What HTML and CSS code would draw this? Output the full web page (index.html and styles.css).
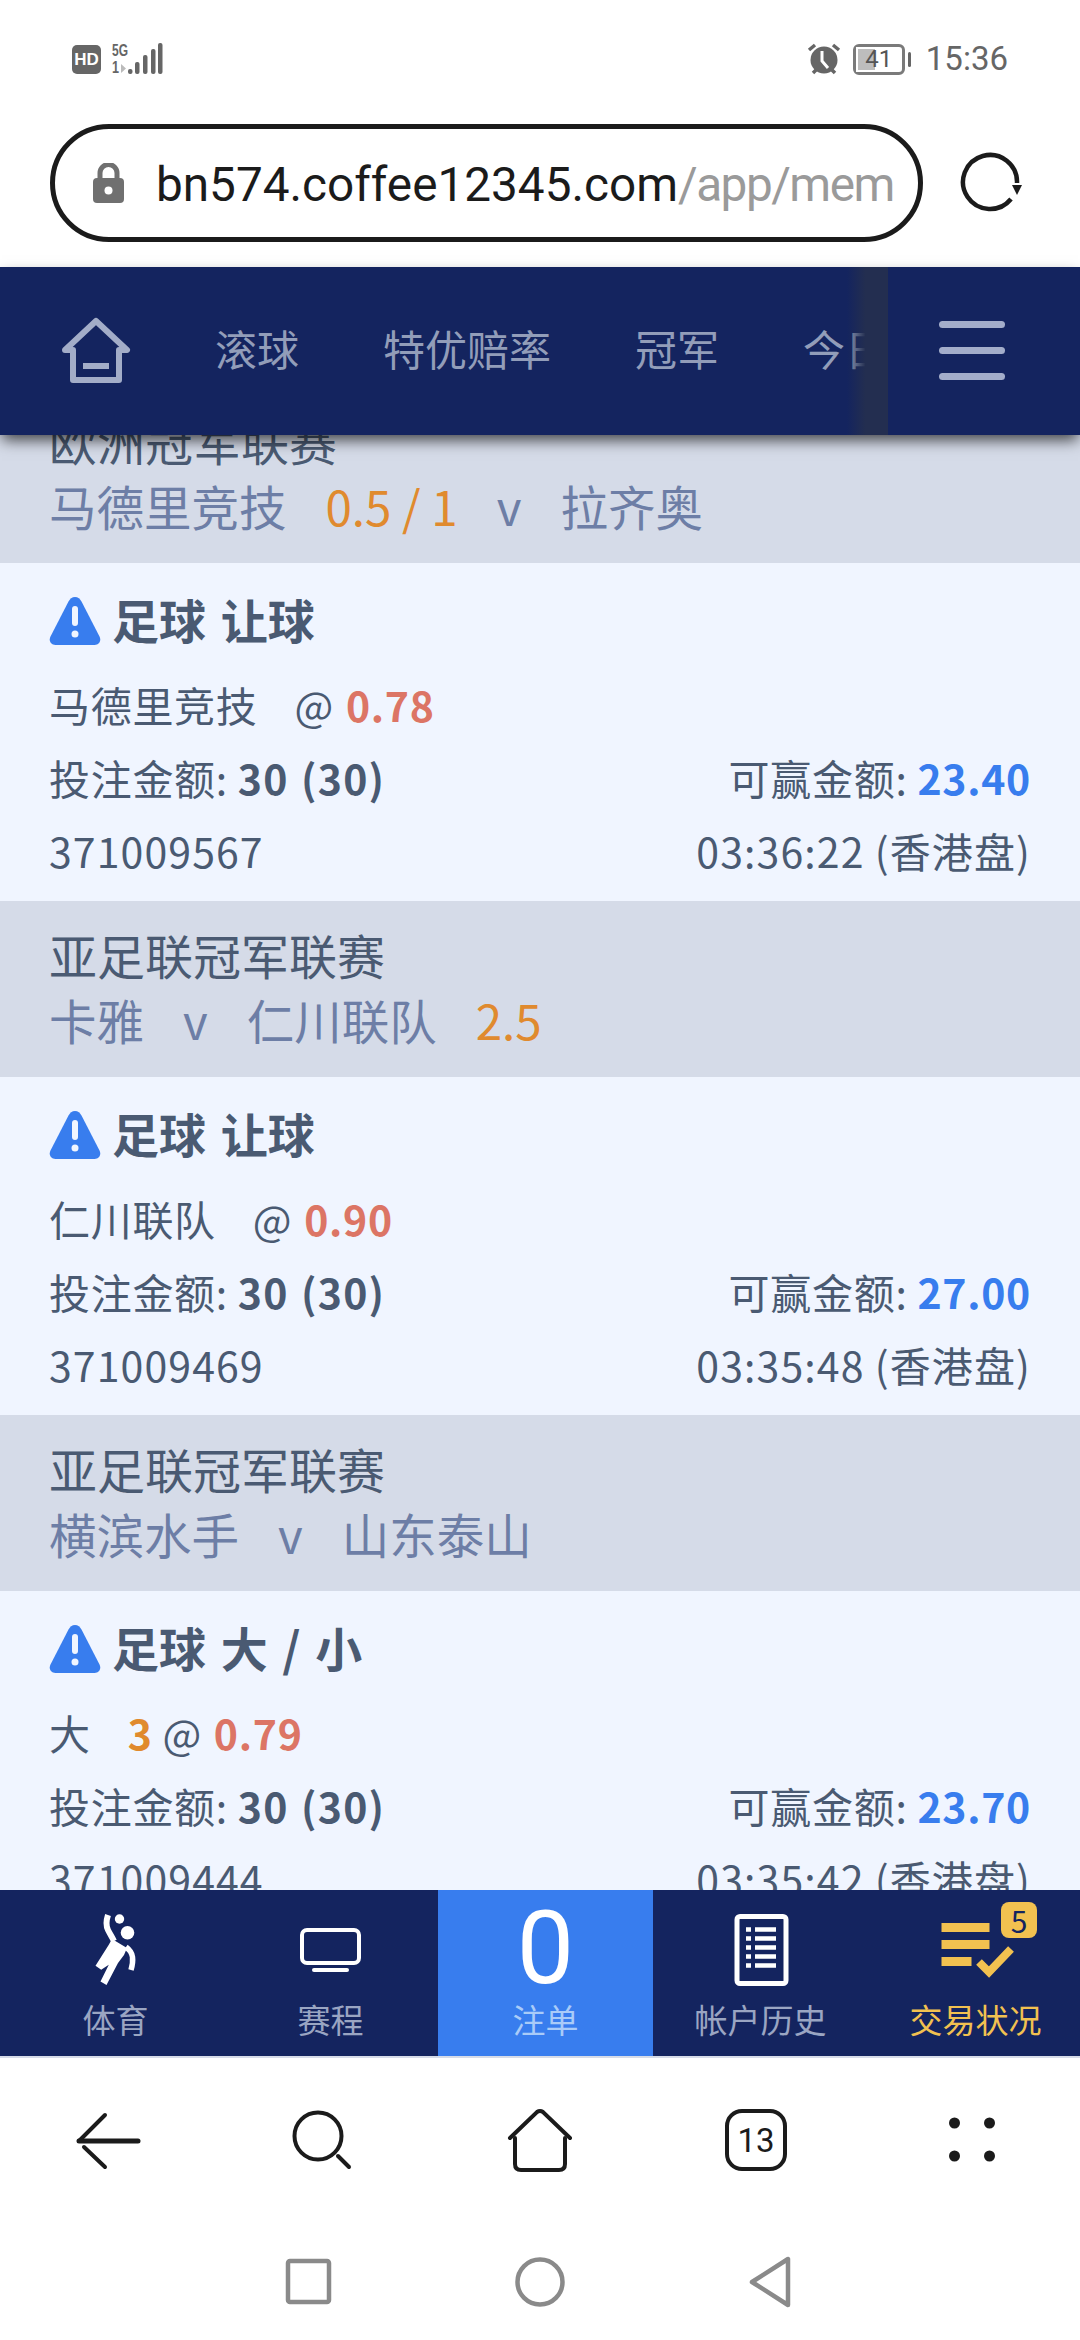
FILE: index.html
```html
<!DOCTYPE html>
<html lang="zh">
<head>
    <meta charset="utf-8">
    <title>交易状况</title>
    <link rel="stylesheet" href="styles.css">
</head>
<body>
<div class="page">
    <div class="status-bar">
        <div class="status-left">
            <span class="hd">HD</span>
            <svg class="signal" width="52" height="32" viewBox="0 0 52 32">
                <text class="net" x="0" y="13" textLength="16" lengthAdjust="spacingAndGlyphs">5G</text>
                <text class="sim" x="0" y="30" textLength="7" lengthAdjust="spacingAndGlyphs">1</text>
                <path class="sim-arrow" d="M9 21v9l5-4.500z"/>
                <rect x="16" y="26" width="4.500" height="5" rx="2"/>
                <rect x="23" y="19" width="4.500" height="12" rx="2"/>
                <rect x="31" y="12" width="4.500" height="19" rx="2"/>
                <rect x="39" y="6" width="4.500" height="25" rx="2"/>
                <rect x="46" y="0" width="4.500" height="31" rx="2"/>
            </svg>
        </div>
        <div class="status-right">
            <svg class="alarm" width="34" height="32" viewBox="0 0 34 32">
                <circle cx="17" cy="17" r="13.500"/>
                <path class="alarm-hand" d="M15 8v10l6 7"/>
                <path class="alarm-bell" d="M2 7l6-5M32 7l-6-5M6 30l3-3M28 30l-3-3"/>
            </svg>
            <div class="battery">
                <div class="battery-fill"></div>
                <span class="battery-num">41</span>
            </div>
            <span class="battery-nub"></span>
            <span class="clock">15:36</span>
        </div>
    </div>

    <div class="url-row">
        <div class="url-pill">
            <svg class="lock" width="31" height="40" viewBox="0 0 31 40">
                <path class="lock-loop" d="M7 17V10a8.500 8.500 0 0 1 17 0v7"/>
                <rect y="15" width="31" height="25" rx="4"/>
                <circle class="lock-hole" cx="15.500" cy="27.500" r="4"/>
            </svg>
            <div class="url-text">bn574.coffee12345.com<span class="url-path">/app/mem</span></div>
        </div>
        <svg class="reload" width="62" height="62" viewBox="0 0 62 62">
            <path d="M51 47A27 27 0 1 1 57 31"/>
            <path class="reload-head" d="M52 33h10l-5 10z"/>
        </svg>
    </div>

    <div class="nav">
        <svg class="nav-home" width="76" height="70" viewBox="0 0 76 70">
            <path d="M15 34H7L38 5l31 29h-8v30H15z"/>
            <rect class="nav-home-bar" x="25" y="47" width="26" height="6"/>
        </svg>
        <div class="nav-items">
            <span>滚球</span>
            <span>特优赔率</span>
            <span>冠军</span>
            <span>今日</span>
        </div>
        <div class="nav-menu">
            <span></span>
            <span></span>
            <span></span>
        </div>
    </div>

    <div class="list">
        <div class="league">
            <div class="league-name">欧洲冠军联赛</div>
            <div class="teams"><span>马德里竞技</span><span class="hdp">0.5 / 1</span><span>v</span><span>拉齐奥</span></div>
        </div>
        <div class="bet">
            <div class="bet-title">
                <svg class="warn" width="52" height="48" viewBox="0 0 52 48"><path d="M26 0c3 0 5 2 6.500 4.500l18 35c2 4 0 8.500-5 8.500H6.500c-5 0-7-4.500-5-8.500l18-35C21 2 23 0 26 0z"/><rect x="23" y="9" width="6" height="20" rx="3"/><circle cx="26" cy="37" r="3.500"/></svg>
                足球 让球
            </div>
            <div class="bet-row"><div><span class="pick">马德里竞技</span>@ <b class="odds">0.78</b></div></div>
            <div class="bet-row"><div>投注金额: <b class="stake">30 (30)</b></div><div>可赢金额: <b class="win">23.40</b></div></div>
            <div class="bet-row bet-ref"><div>371009567</div><div>03:36:22 (香港盘)</div></div>
        </div>
        <div class="league">
            <div class="league-name">亚足联冠军联赛</div>
            <div class="teams"><span>卡雅</span><span>v</span><span>仁川联队</span><span class="hdp">2.5</span></div>
        </div>
        <div class="bet">
            <div class="bet-title">
                <svg class="warn" width="52" height="48" viewBox="0 0 52 48"><path d="M26 0c3 0 5 2 6.500 4.500l18 35c2 4 0 8.500-5 8.500H6.500c-5 0-7-4.500-5-8.500l18-35C21 2 23 0 26 0z"/><rect x="23" y="9" width="6" height="20" rx="3"/><circle cx="26" cy="37" r="3.500"/></svg>
                足球 让球
            </div>
            <div class="bet-row"><div><span class="pick">仁川联队</span>@ <b class="odds">0.90</b></div></div>
            <div class="bet-row"><div>投注金额: <b class="stake">30 (30)</b></div><div>可赢金额: <b class="win">27.00</b></div></div>
            <div class="bet-row bet-ref"><div>371009469</div><div>03:35:48 (香港盘)</div></div>
        </div>
        <div class="league">
            <div class="league-name">亚足联冠军联赛</div>
            <div class="teams"><span>横滨水手</span><span>v</span><span>山东泰山</span></div>
        </div>
        <div class="bet">
            <div class="bet-title">
                <svg class="warn" width="52" height="48" viewBox="0 0 52 48"><path d="M26 0c3 0 5 2 6.500 4.500l18 35c2 4 0 8.500-5 8.500H6.500c-5 0-7-4.500-5-8.500l18-35C21 2 23 0 26 0z"/><rect x="23" y="9" width="6" height="20" rx="3"/><circle cx="26" cy="37" r="3.500"/></svg>
                足球 大 / 小
            </div>
            <div class="bet-row"><div><span class="pick">大</span><b class="line">3</b> @ <b class="odds">0.79</b></div></div>
            <div class="bet-row"><div>投注金额: <b class="stake">30 (30)</b></div><div>可赢金额: <b class="win">23.70</b></div></div>
            <div class="bet-row bet-ref"><div>371009444</div><div>03:35:42 (香港盘)</div></div>
        </div>
    </div>

    <div class="tabbar">
        <div class="tab">
            <svg width="80" height="80" viewBox="0 0 80 80">
                <circle class="fill-white" cx="43.500" cy="9" r="4.700"/>
                <circle class="fill-white" cx="51.500" cy="22.700" r="6.800"/>
                <path class="stroke-white" d="M32 5c-2 6-2 11 0 15s4 7 6 11" stroke-width="6"/>
                <path class="fill-white" d="M36 29l15 9-3 7-6 8-11.500 22-6-3.500 8.300-16.700-7.600 5-5.700-4 13.300-21z"/>
                <path class="stroke-white" d="M50 37c4 3 6 6 6.500 10s0 8-1.500 13" stroke-width="5.500"/>
            </svg>
            <span class="tab-label">体育</span>
        </div>
        <div class="tab">
            <svg width="80" height="80" viewBox="0 0 80 80">
                <rect class="stroke-white" x="11" y="20" width="57" height="33" rx="5" stroke-width="4"/>
                <rect class="fill-white" x="21" y="58" width="37" height="4" rx="2"/>
            </svg>
            <span class="tab-label">赛程</span>
        </div>
        <div class="tab tab-active">
            <div class="bet-count">0</div>
            <span class="tab-label">注单</span>
        </div>
        <div class="tab">
            <svg width="80" height="80" viewBox="0 0 80 80">
                <rect class="stroke-white" x="16" y="6.500" width="49" height="67" rx="3" stroke-width="5"/>
                <path class="stroke-white" d="M25 19.500h5M34 19.500h21M25 28.500h5M34 28.500h21M25 37.500h5M34 37.500h21M25 46.500h5M34 46.500h21M25 55.500h5M34 55.500h21" stroke-width="4.500"/>
            </svg>
            <span class="tab-label">帐户历史</span>
        </div>
        <div class="tab tab-status">
            <svg width="80" height="80" viewBox="0 0 80 80">
                <path class="stroke-yellow" d="M5.500 17.500h48M5.500 34.500h48M5.500 51.500h30" stroke-width="9"/>
                <path class="stroke-yellow" d="M43 52l10 10 22-23" stroke-width="8"/>
            </svg>
            <span class="tab-label">交易状况</span>
            <span class="tab-badge">5</span>
        </div>
    </div>

    <div class="toolbar">
        <div class="tool">
            <svg width="80" height="80" viewBox="0 0 80 80">
                <path class="line-thick" d="M11 41h59"/>
                <path d="M37 15L11 41M16 47l21 20"/>
            </svg>
        </div>
        <div class="tool">
            <svg width="80" height="80" viewBox="0 0 80 80">
                <circle cx="34" cy="36" r="23.500"/>
                <path d="M54 56l11 11"/>
            </svg>
        </div>
        <div class="tool">
            <svg width="80" height="80" viewBox="0 0 80 80">
                <path d="M10 38L37 12q3-2 6 0l27 26"/>
                <path d="M15 38v26q0 6 6 6h38q6 0 6-6V38"/>
            </svg>
        </div>
        <div class="tool">
            <svg width="80" height="80" viewBox="0 0 80 80">
                <rect x="11" y="11" width="58" height="58" rx="15"/>
                <text class="tabs-count" x="40" y="52" text-anchor="middle">13</text>
            </svg>
        </div>
        <div class="tool">
            <svg width="80" height="80" viewBox="0 0 80 80">
                <circle class="dot" cx="22.500" cy="23" r="5.500"/>
                <circle class="dot" cx="57.500" cy="23" r="5.500"/>
                <circle class="dot" cx="22.500" cy="56" r="5.500"/>
                <circle class="dot" cx="57.500" cy="56" r="5.500"/>
            </svg>
        </div>
    </div>

    <div class="sys-nav">
        <svg width="60" height="60" viewBox="0 0 60 60"><rect x="9" y="9" width="41" height="41" rx="2"/></svg>
        <svg width="60" height="60" viewBox="0 0 60 60"><circle cx="30" cy="30" r="22.500"/></svg>
        <svg width="60" height="60" viewBox="0 0 60 60"><path d="M47 7v46L11 30z"/></svg>
    </div>
</div>
</body>
</html>
```

FILE: styles.css
```css
* {
    box-sizing: border-box;
}

body {
    margin: 0;
    font-family: "Noto Sans CJK SC", "Noto Sans", sans-serif;
    background-color: #ffffff;
}

.page {
    width: 1080px;
    height: 2340px;
    display: flex;
    flex-direction: column;
    overflow: hidden;
}

/* status bar */
.status-bar {
    height: 100px;
    padding: 43px 72px 0 72px;
    display: flex;
    justify-content: space-between;
    align-items: flex-start;
    flex-shrink: 0;
}

.status-left,
.status-right {
    display: flex;
    align-items: center;
    height: 32px;
}

.hd {
    width: 29px;
    height: 29px;
    margin-right: 11px;
    border-radius: 5px;
    background-color: #666666;
    color: #ffffff;
    font-family: "Liberation Sans", sans-serif;
    font-size: 17px;
    font-weight: 700;
    line-height: 29px;
    text-align: center;
}

.signal rect {
    fill: #666666;
}

.net,
.sim {
    font-family: "Liberation Sans", sans-serif;
    font-size: 17px;
    font-weight: 700;
    fill: #666666;
}

.sim-arrow {
    fill: #bbbbbb;
}

.alarm {
    margin-right: 12px;
}

.alarm circle {
    fill: #666666;
}

.alarm-hand {
    fill: none;
    stroke: #ffffff;
    stroke-width: 3;
}

.alarm-bell {
    fill: none;
    stroke: #666666;
    stroke-width: 3.500;
}

.battery {
    position: relative;
    width: 52px;
    height: 31px;
    border: 3px solid #7a7a7a;
    border-radius: 6px;
}

.battery-fill {
    width: 21px;
    height: 100%;
    border: 2px solid #ffffff;
    background-color: #bdbdbd;
}

.battery-num {
    position: absolute;
    left: 0;
    right: 0;
    top: -3px;
    color: #555555;
    font-family: "Roboto", sans-serif;
    font-size: 24px;
    line-height: 31px;
    text-align: center;
}

.battery-nub {
    width: 3px;
    height: 15px;
    margin: 0 15px 0 3px;
    border-radius: 2px;
    background-color: #666666;
}

.clock {
    color: #666666;
    font-family: "Roboto", sans-serif;
    font-size: 33px;
    line-height: 32px;
}

/* url row */
.url-row {
    height: 167px;
    padding: 24px 0 25px 50px;
    display: flex;
    align-items: center;
    flex-shrink: 0;
}

.url-pill {
    width: 873px;
    height: 118px;
    padding: 0 14px 0 38px;
    display: flex;
    align-items: center;
    border: 5px solid #1b1b1b;
    border-radius: 59px;
}

.lock {
    flex-shrink: 0;
    margin-right: 32px;
}

.lock rect {
    fill: #707070;
}

.lock-loop {
    fill: none;
    stroke: #707070;
    stroke-width: 5;
}

.lock-hole {
    fill: #ffffff;
}

.url-text {
    padding-top: 3px;
    overflow: hidden;
    white-space: nowrap;
    color: #1b1b1b;
    font-family: "Roboto", sans-serif;
    font-size: 47.700px;
}

.url-path {
    color: #9a9a9a;
    letter-spacing: -1.500px;
}

.reload {
    margin-left: 37px;
}

.reload path {
    fill: none;
    stroke: #1b1b1b;
    stroke-width: 4.500;
}

.reload .reload-head {
    fill: #1b1b1b;
    stroke: none;
}

/* top nav */
.nav {
    position: relative;
    z-index: 2;
    height: 168px;
    display: flex;
    align-items: flex-start;
    flex-shrink: 0;
    background-color: #14245f;
    box-shadow: 0 7px 14px -2px rgba(0, 0, 0, 0.7);
}

.nav-home {
    flex-shrink: 0;
    margin: 49px 0 0 58px;
}

.nav-home path {
    fill: none;
    stroke: #a3adc8;
    stroke-width: 6;
    stroke-linejoin: round;
}

.nav-home-bar {
    fill: #a3adc8;
}

.nav-items {
    flex: 1;
    min-width: 0;
    height: 100%;
    padding: 0 0 7px 81px;
    display: flex;
    align-items: center;
    gap: 84px;
    overflow: hidden;
    white-space: nowrap;
    color: #929db9;
    font-size: 42px;
}

.nav-items span {
    flex-shrink: 0;
}

.nav-menu {
    position: relative;
    width: 192px;
    height: 100%;
    padding: 54px 75px 0 51px;
    flex-shrink: 0;
    background-color: #14245f;
}

.nav-menu::before {
    content: "";
    position: absolute;
    top: 0;
    bottom: 0;
    left: -41px;
    width: 41px;
    background: linear-gradient(to right, rgba(35, 46, 80, 0), #232e50 45%, #232e50);
}

.nav-menu span {
    display: block;
    height: 7px;
    margin-bottom: 19px;
    border-radius: 4px;
    background-color: #a3adca;
}

/* bet list */
.list {
    flex: 1;
    min-height: 0;
    overflow: hidden;
    color: #4a5a72;
}

.league {
    height: 176px;
    padding: 21px 49px 25px;
    background-color: #d5dbe8;
    font-size: 48px;
    line-height: 65px;
}

.league:first-child {
    margin-top: -48px;
}

.teams {
    display: flex;
    gap: 39px;
    color: #6d7ea6;
    font-size: 47.500px;
}

.hdp {
    color: #e08a2e;
}

.bet {
    height: 338px;
    padding: 21px 49px 14px;
    background-color: #f0f5ff;
    font-size: 41px;
    letter-spacing: 0.700px;
    line-height: 73px;
}

.bet-title {
    height: 70px;
    margin-bottom: 14px;
    display: flex;
    align-items: center;
    font-size: 47px;
    font-weight: 700;
    letter-spacing: 0;
    word-spacing: 4px;
    line-height: 70px;
}

.warn {
    flex-shrink: 0;
    margin: 3px 11px 0 0;
    fill: #387dee;
}

.warn rect,
.warn circle {
    fill: #f0f5ff;
}

.bet-row {
    display: flex;
    justify-content: space-between;
}

.bet-ref {
    letter-spacing: 1.100px;
}

.pick {
    margin-right: 37px;
}

.stake {
    letter-spacing: 1.200px;
    word-spacing: 2px;
}

.odds {
    margin-left: 2px;
    color: #dc7565;
}

.line {
    color: #e08a2e;
}

.win {
    color: #387dee;
}

/* bottom tabs */
.tabbar {
    height: 166px;
    padding-left: 8px;
    display: grid;
    grid-template-columns: repeat(5, 215px);
    flex-shrink: 0;
    background-color: #14245f;
}

.tab {
    position: relative;
    padding-top: 20px;
    display: flex;
    flex-direction: column;
    align-items: center;
}

.tab svg {
    display: block;
}

.tab-label {
    margin-top: 2px;
    color: #9aa5c2;
    font-size: 33px;
    line-height: 54px;
}

.tab-active {
    background-color: #387dee;
}

.tab-active .tab-label {
    color: #a9cbf8;
}

.bet-count {
    height: 80px;
    color: #ffffff;
    font-family: "Roboto", sans-serif;
    font-size: 102px;
    line-height: 76px;
}

.tab-status .tab-label {
    color: #f2c150;
}

.tab-badge {
    position: absolute;
    top: 12px;
    left: 133px;
    width: 36px;
    height: 36px;
    border-radius: 8px;
    background-color: #f2c150;
    color: #14245f;
    font-size: 30px;
    line-height: 36px;
    text-align: center;
}

.fill-white {
    fill: #ffffff;
}

.stroke-white {
    fill: none;
    stroke: #ffffff;
}

.stroke-yellow {
    fill: none;
    stroke: #f2c150;
}

/* browser toolbar */
.toolbar {
    height: 154px;
    padding-top: 42px;
    display: grid;
    grid-template-columns: repeat(5, 216px);
    flex-shrink: 0;
    border-top: 2px solid #d5dbe8;
}

.tool {
    display: flex;
    justify-content: center;
}

.tool svg {
    fill: none;
    stroke: #1b1b1b;
    stroke-width: 4;
    stroke-linecap: round;
}

.tool .line-thick {
    stroke-width: 5;
}

.tool .dot {
    fill: #1b1b1b;
    stroke: none;
}

.tabs-count {
    fill: #1b1b1b;
    stroke: none;
    font-family: "Roboto", sans-serif;
    font-size: 33px;
}

/* system nav */
.sys-nav {
    height: 130px;
    flex-shrink: 0;
    padding-top: 42px;
    display: flex;
    justify-content: center;
    gap: 171px;
}

.sys-nav svg {
    fill: none;
    stroke: #8a8a8a;
    stroke-width: 4.500;
    stroke-linejoin: round;
}
```
